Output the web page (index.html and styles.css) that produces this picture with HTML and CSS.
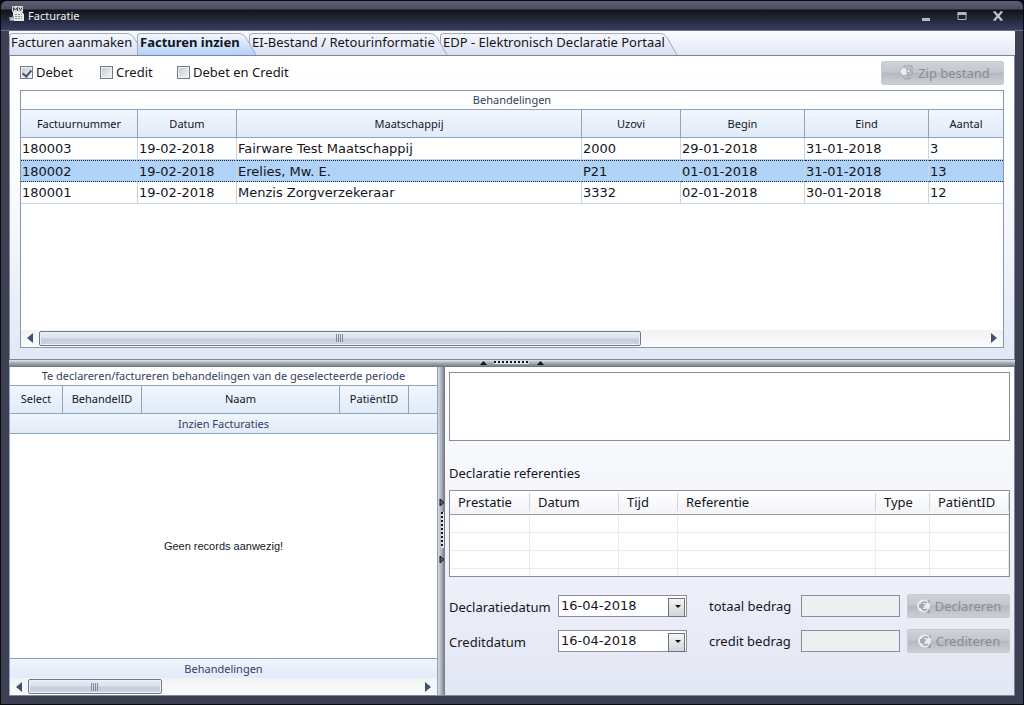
FILE: index.html
```html
<!DOCTYPE html>
<html lang="nl">
<head>
<meta charset="utf-8">
<title>Facturatie</title>
<link rel="stylesheet" href="styles.css">
</head>
<body>
<div class="window">
  <header class="titlebar">
    <svg class="app-icon" width="16" height="16" viewBox="0 0 16 16" aria-hidden="true">
      <path d="M4 6h9l2 2v7H4z" fill="#e9ece9"/>
      <path d="M3 0h11v6H3z" fill="#d5d9d6"/>
      <path d="M4.500 5V1.500L6.500 4l2-2.500V5M10 1.500l1.500 3 1.500-3" fill="none" stroke="#3b3f47"/>
      <path d="M6 8.500h2M9 8.500h2M12 8.500h1M6 10.500h2M9 10.500h2M12 10.500h1M6 12.500h2M9 12.500h2M12 12.500h1" stroke="#8a9096"/>
      <path d="M0 11h3l1-2 1 2v4H1z" fill="#8b9299"/>
      <path d="M1 13h5" stroke="#eef1ee"/>
    </svg>
    <h1 class="title">Facturatie</h1>
    <div class="controls">
      <button class="control" type="button" aria-label="Minimaliseren"><svg width="12" height="12" viewBox="0 0 12 12"><path d="M2 8h8v3H2z" fill="#b5b7c4"/></svg></button>
      <button class="control" type="button" aria-label="Maximaliseren"><svg width="12" height="12" viewBox="0 0 12 12"><path d="M2 3.500h8v6H2z" fill="none" stroke="#b5b7c4"/><path d="M1.500 2h9v3h-9z" fill="#b5b7c4"/></svg></button>
      <button class="control" type="button" aria-label="Sluiten"><svg width="12" height="12" viewBox="0 0 12 12"><path d="M2.500 2l7 8M9.500 2l-7 8" stroke="#c3c5d0" stroke-width="2.200"/><path d="M1 2h3M8 2h3M1 10h3M8 10h3" stroke="#c3c5d0"/></svg></button>
    </div>
  </header>

  <main class="content">
    <nav class="tabs" role="tablist">
      <button class="tab tab-create" type="button" role="tab"><span class="tab-face"></span><svg class="tab-end" width="20" height="22" viewBox="0 0 20 22"><path d="M0 .5C7 .5 8 3 11 8L19 22H0z" fill="url(#face)"/><path d="M0 .5C7 .5 8 3 11 8L19 22" fill="none" stroke="#a3aabb"/></svg><span class="tab-text">Facturen aanmaken</span></button>
      <button class="tab tab-view selected" type="button" role="tab" aria-selected="true"><span class="tab-face"></span><svg class="tab-end" width="20" height="22" viewBox="0 0 20 22"><path d="M0 .5C7 .5 8 3 11 8L19 22H0z" fill="url(#faceActive)"/><path d="M0 .5C7 .5 8 3 11 8L19 22" fill="none" stroke="#a3aabb"/></svg><span class="tab-text">Facturen inzien</span></button>
      <button class="tab tab-return" type="button" role="tab"><span class="tab-face"></span><svg class="tab-end" width="20" height="22" viewBox="0 0 20 22"><path d="M0 .5C7 .5 8 3 11 8L19 22H0z" fill="url(#face)"/><path d="M0 .5C7 .5 8 3 11 8L19 22" fill="none" stroke="#a3aabb"/></svg><span class="tab-text">EI-Bestand / Retourinformatie</span></button>
      <button class="tab tab-portal" type="button" role="tab"><span class="tab-face"></span><svg class="tab-end" width="20" height="22" viewBox="0 0 20 22"><defs><linearGradient id="face" x2="0" y2="1"><stop stop-color="#f7f8fd"/><stop offset="1" stop-color="#d9dff1"/></linearGradient><linearGradient id="faceActive" x2="0" y2="1"><stop stop-color="#f4f8ff"/><stop offset="1" stop-color="#b4d1f8"/></linearGradient></defs><path d="M0 .5C7 .5 8 3 11 8L19 22H0z" fill="url(#face)"/><path d="M0 .5C7 .5 8 3 11 8L19 22" fill="none" stroke="#a3aabb"/></svg><span class="tab-text">EDP - Elektronisch Declaratie Portaal</span></button>
    </nav>

    <section class="invoices">
      <div class="filters">
        <label class="check check-debet"><input type="checkbox" checked>Debet</label>
        <label class="check check-credit"><input type="checkbox">Credit</label>
        <label class="check"><input type="checkbox">Debet en Credit</label>
        <button class="push zip" type="button" disabled><svg width="16" height="16" viewBox="0 0 16 16" aria-hidden="true"><path d="M5 1h8v9H9v3h3M5 1v4" fill="#c9cdd1" stroke="#999ea4"/><circle cx="5" cy="6.500" r="4" fill="#eceeef" stroke="#b0b4b9"/><path d="M8 4h3v4H8z" fill="#e9ebec" stroke="#989da3"/><path d="M3 11l3 3h5v-2" fill="none" stroke="#a2a6ab"/></svg>Zip bestand</button>
      </div>
      <div class="grid-box">
        <div class="band-title">Behandelingen</div>
        <div class="grid-area">
          <table class="grid">
            <colgroup><col class="c-number"><col class="c-date"><col><col class="c-uzovi"><col class="c-begin"><col class="c-end"><col class="c-count"></colgroup>
            <thead><tr><th>Factuurnummer</th><th>Datum</th><th>Maatschappij</th><th>Uzovi</th><th>Begin</th><th>Eind</th><th>Aantal</th></tr></thead>
            <tbody>
              <tr><td>180003</td><td>19-02-2018</td><td>Fairware Test Maatschappij</td><td>2000</td><td>29-01-2018</td><td>31-01-2018</td><td>3</td></tr>
              <tr class="active"><td>180002</td><td>19-02-2018</td><td>Erelies, Mw. E.</td><td>P21</td><td>01-01-2018</td><td>31-01-2018</td><td>13</td></tr>
              <tr><td>180001</td><td>19-02-2018</td><td>Menzis Zorgverzekeraar</td><td>3332</td><td>02-01-2018</td><td>30-01-2018</td><td>12</td></tr>
            </tbody>
          </table>
        </div>
        <div class="scroll">
          <button class="arrow" type="button" aria-label="Naar links"><svg width="6" height="10" viewBox="0 0 6 10"><path d="M6 0v10L0 5z"/></svg></button>
          <div class="track"><div class="thumb thumb-top"></div></div>
          <button class="arrow" type="button" aria-label="Naar rechts"><svg width="6" height="10" viewBox="0 0 6 10"><path d="M0 0v10l6-5z"/></svg></button>
        </div>
      </div>
    </section>

    <div class="splitter-h">
      <svg width="64" height="6" viewBox="0 0 64 6" aria-hidden="true"><path d="M0 5l3.500-4L7 5zM57 5l3.500-4L64 5z" fill="#14171b"/><path d="M14 2.500h35" stroke="#e4e7ea" stroke-width="3"/><path d="M14 2h35" stroke="#14171b" stroke-width="2" stroke-dasharray="2 2"/></svg>
    </div>

    <div class="lower">
      <section class="treatments">
        <div class="band-title">Te declareren/factureren behandelingen van de geselecteerde periode</div>
        <table class="grid">
          <colgroup><col class="t-select"><col class="t-id"><col><col class="t-patient"><col class="t-rest"></colgroup>
          <thead><tr><th>Select</th><th>BehandelID</th><th>Naam</th><th>PatiëntID</th><th></th></tr></thead>
        </table>
        <div class="band band-top">Inzien Facturaties</div>
        <p class="empty">Geen records aanwezig!</p>
        <div class="band band-bottom">Behandelingen</div>
        <div class="scroll">
          <button class="arrow" type="button" aria-label="Naar links"><svg width="6" height="10" viewBox="0 0 6 10"><path d="M6 0v10L0 5z"/></svg></button>
          <div class="track"><div class="thumb thumb-low"></div></div>
          <button class="arrow" type="button" aria-label="Naar rechts"><svg width="6" height="10" viewBox="0 0 6 10"><path d="M0 0v10l6-5z"/></svg></button>
        </div>
      </section>

      <div class="splitter-v">
        <svg width="6" height="66" viewBox="0 0 6 66" aria-hidden="true"><path d="M1 1l4 3.500L1 8zM1 58l4 3.500L1 65z" fill="#59606b" stroke="#14171b"/><path d="M3.500 14v36" stroke="#e4e7ea" stroke-width="3"/><path d="M3 14v36" stroke="#14171b" stroke-width="2" stroke-dasharray="2 2"/></svg>
      </div>

      <section class="details">
        <textarea class="notes" aria-label="Opmerkingen"></textarea>
        <h2 class="subtitle">Declaratie referenties</h2>
        <div class="list-box">
          <table class="list">
            <colgroup><col class="l-perf"><col class="l-date"><col class="l-time"><col><col class="l-type"><col class="l-patient"></colgroup>
            <thead><tr><th>Prestatie</th><th>Datum</th><th>Tijd</th><th>Referentie</th><th>Type</th><th>PatiëntID</th></tr></thead>
            <tbody>
              <tr><td></td><td></td><td></td><td></td><td></td><td></td></tr>
              <tr><td></td><td></td><td></td><td></td><td></td><td></td></tr>
              <tr><td></td><td></td><td></td><td></td><td></td><td></td></tr>
              <tr><td></td><td></td><td></td><td></td><td></td><td></td></tr>
            </tbody>
          </table>
        </div>
        <form class="form">
          <label for="declDate">Declaratiedatum</label>
          <span class="combo"><select id="declDate"><option>16-04-2018</option></select></span>
          <label class="amount-label" for="total">totaal bedrag</label>
          <input class="amount" id="total" type="text" disabled>
          <button class="push" type="button" disabled><svg width="16" height="16" viewBox="0 0 16 16" aria-hidden="true"><circle cx="7.500" cy="8" r="6.500" fill="#e9ebee"/><path d="M11 5C8 2.500 5 5 5 8s3 5.500 6 3M3 7h6M3 9h5" fill="none" stroke="#9b9fa8" stroke-width="1.500"/><path d="M13 2v3M13 11v4M11 14h3" stroke="#8d929b"/></svg>Declareren</button>
          <label for="creditDate">Creditdatum</label>
          <span class="combo"><select id="creditDate"><option>16-04-2018</option></select></span>
          <label class="amount-label" for="credit">credit bedrag</label>
          <input class="amount" id="credit" type="text" disabled>
          <button class="push" type="button" disabled><svg width="16" height="16" viewBox="0 0 16 16" aria-hidden="true"><circle cx="7.500" cy="8" r="6.500" fill="#e9ebee"/><path d="M11 5C8 2.500 5 5 5 8s3 5.500 6 3M3 7h6M3 9h5" fill="none" stroke="#9b9fa8" stroke-width="1.500"/><path d="M13 2v3M13 11v4M11 14h3" stroke="#8d929b"/></svg>Crediteren</button>
        </form>
      </section>
    </div>
  </main>
</div>
</body>
</html>
```
FILE: styles.css
```css
* { box-sizing: border-box; }

body {
  margin: 0;
  background: #0b0c10;
  color: #15151c;
  font: 13px/16px "Noto Sans", sans-serif;
}

button, input, select, textarea { font: inherit; color: inherit; margin: 0; }

.window {
  display: flex;
  flex-direction: column;
  height: 100vh;
  min-height: 560px;
  padding-bottom: 8px;
  border: 1px solid #08090d;
  border-radius: 7px 7px 0 0;
  background: #3c4052;
}

/* Title bar */
.titlebar {
  display: flex;
  align-items: center;
  flex: none;
  height: 30px;
  padding: 0 8px;
  border-radius: 6px 6px 0 0;
  border-bottom: 1px solid #6d7186;
  background: linear-gradient(#5c5e75 0, #4b4d62 8px, #14151a 9px, #1c1e28 14px, #363c62 28px);
  color: #eef0f5;
}
.app-icon { margin: 0 3px 3px 0; }
.title { flex: 1; margin: 0; font: 11px/16px "Noto Sans", sans-serif; }
.controls { display: flex; gap: 12px; padding-right: 5px; }
.control { display: grid; place-items: center; width: 24px; height: 20px; padding: 0; border: 0; background: none; }

.content {
  display: grid;
  grid-template-rows: 24px minmax(0, 305fr) 7px minmax(0, 329fr);
  flex: 1;
  min-height: 0;
  margin: 0 8px;
  border-bottom: 1px solid #7e8799;
  background: #fff;
}

/* Tabs */
.tabs {
  display: flex;
  padding: 2px 0 0;
  background: linear-gradient(#fbfcff, #e4e8f5);
}
.tab {
  position: relative;
  height: 22px;
  padding: 0 0 4px 3px;
  border: 0;
  background: none;
  text-align: left;
  white-space: nowrap;
}
.tab-create { width: 128px; padding-left: 2px; }
.tab-view { width: 112px; z-index: 4; font-weight: bold; }
.tab-return { width: 191px; z-index: 2; }
.tab-portal { width: 230px; z-index: 1; }
.tab-face {
  position: absolute;
  inset: 0 12px 0 0;
  border: solid #a3aabb;
  border-width: 1px 0 0 1px;
  border-radius: 4px 0 0 0;
  background: linear-gradient(#f7f8fd, #d9dff1);
}
.selected .tab-face { background: linear-gradient(#f4f8ff, #b4d1f8); }
.tab-end { position: absolute; top: 0; right: -8px; }
.tab-text { position: relative; }

/* Upper panel */
.invoices {
  display: flex;
  flex-direction: column;
  padding: 5px 10px 11px;
  border: 1px solid #7e8799;
  background: linear-gradient(#fff, #fbfcfe 40%, #e3e8f6);
}
.filters { display: flex; align-items: flex-start; height: 25px; margin-bottom: 4px; }
.check { display: flex; align-items: center; gap: 3px; height: 22px; }
.check-debet { width: 80px; }
.check-credit { width: 77px; }
.check input {
  display: grid;
  place-items: center;
  width: 13px;
  height: 13px;
  appearance: none;
  border: 1px solid #747b88;
  background: linear-gradient(135deg, #c6cacd, #f4f5f5);
  box-shadow: inset 0 0 0 1px #eef0f1;
}
.check input:checked::before {
  content: "";
  width: 4px;
  height: 7px;
  border: solid #42597e;
  border-width: 0 2px 2px 0;
  transform: rotate(40deg);
}

.push {
  display: flex;
  align-items: center;
  justify-content: center;
  gap: 3px;
  height: 24px;
  padding: 0;
  border: 1px solid #c6cad1;
  border-radius: 2px;
  background: linear-gradient(#cfd3d8 0, #c3c7ce 46%, #b3b8c1 50%, #ccd0d5 100%);
  color: #898d96;
}
.zip { width: 123px; margin-left: auto; padding-left: 4px; }

.grid-box {
  display: flex;
  flex-direction: column;
  flex: 1;
  min-height: 0;
  border: 1px solid #8596b0;
  background: #fff;
}
.grid-area { flex: 1; min-height: 0; overflow: hidden; }
.band-title {
  flex: none;
  height: 19px;
  border-bottom: 1px solid #8ea3bf;
  background: #fff;
  color: #34405f;
  font-size: 11px;
  line-height: 18px;
  text-align: center;
}

.grid { width: 100%; table-layout: fixed; border-collapse: separate; border-spacing: 0; }
.grid th {
  height: 28px;
  padding: 0;
  border: solid #8ea3bf;
  border-width: 0 1px 1px 0;
  background: linear-gradient(#f1f6fd, #e0ebf9);
  font-size: 11px;
  font-weight: normal;
}
.grid th:last-child, .grid td:last-child { border-right: 0; }
.grid td {
  height: 22px;
  padding: 1px 1px 0;
  border: solid #c3d7ec;
  border-width: 0 1px 1px 0;
  font: 13px/16px "DejaVu Sans", sans-serif;
  white-space: nowrap;
}
.grid .active td {
  border-top: 1px dotted #14233c;
  border-bottom: 1px dotted #14233c;
  background: #afd2f6;
}
.c-number { width: 117px; }
.c-date, .c-uzovi { width: 99px; }
.c-begin { width: 124px; }
.c-end { width: 124px; }
.c-count { width: 74px; }

/* Scroll bars */
.scroll { display: flex; flex: none; height: 17px; background: linear-gradient(#f1f3f3, #fafbfb); }
.arrow { display: grid; place-items: center; width: 18px; padding: 0; border: 0; background: none; fill: #44506e; }
.track { flex: 1; }
.thumb {
  height: 15px;
  margin-top: 1px;
  border: 1px solid #6d7890;
  border-radius: 2px;
  box-shadow: inset 0 0 0 1px #eef1f7;
  background:
    repeating-linear-gradient(90deg, #818a9c 0, #818a9c 1px, transparent 1px, transparent 2px) center / 8px 8px no-repeat,
    linear-gradient(#e6eaf2 0, #dce2ec 45%, #c6cedd 55%, #cdd5e2 100%);
}
.thumb-top { width: 63.6%; }
.thumb-low { width: 34.2%; }

/* Splitters */
.splitter-h { display: grid; place-items: center; background: linear-gradient(#e3e6ea, #a9afb8 40%, #6d747e); }
.splitter-v { display: grid; place-items: center; background: linear-gradient(90deg, #d7dbe1, #a9afb8 50%, #6d747e); }

/* Lower left */
.lower { display: grid; grid-template-columns: minmax(0, 429fr) 7px minmax(0, 570fr); min-height: 0; }
.treatments { display: flex; flex-direction: column; min-height: 0; border-left: 1px solid #8ea3bf; border-right: 1px solid #8ea3bf; }
.t-select { width: 53px; }
.t-id { width: 79px; }
.t-patient { width: 69px; }
.t-rest { width: 28px; }
.band {
  flex: none;
  height: 20px;
  background: linear-gradient(#f0f5fd, #e2ebf9);
  color: #34405f;
  font-size: 11px;
  line-height: 19px;
  text-align: center;
}
.band-top { border-bottom: 1px solid #8ea3bf; }
.band-bottom { border-top: 1px solid #8ea3bf; }
.empty {
  display: grid;
  place-items: center;
  flex: 1;
  margin: 0;
  font: 11px/16px "Liberation Sans", sans-serif;
}

/* Lower right */
.details {
  display: flex;
  flex-direction: column;
  min-height: 0;
  padding: 5px 4px 0;
  border-right: 1px solid #7e8799;
  background: linear-gradient(#fff, #f8f9fd 25%, #e3e7f4);
}
.notes { display: block; flex: none; width: 100%; height: 69px; border: 1px solid #8b8d9c; background: #fff; resize: none; }
.subtitle { margin: 24px 0 9px; font: inherit; }
.list-box { flex: none; height: 87px; overflow: hidden; border: 1px solid #8b8d9c; background: #fff; }
.list { width: 100%; table-layout: fixed; border-collapse: separate; border-spacing: 0; }
.list th {
  height: 24px;
  padding: 0 8px;
  border-bottom: 1px solid #9a9ba8;
  background: linear-gradient(90deg, #d5d6dc, #d5d6dc) right center / 1px 18px no-repeat, linear-gradient(#fff, #f3f4f8);
  font-weight: normal;
  text-align: left;
}
.list td { height: 18px; padding: 0; border: solid #ebecf0; border-width: 0 1px 1px 0; }
.l-perf { width: 80px; }
.l-date { width: 89px; }
.l-time { width: 59px; }
.l-type { width: 54px; }
.l-patient { width: 79px; }

.form {
  display: grid;
  grid-template-columns: 109px 129px minmax(93px, 1fr) 99px 110px;
  row-gap: 11px;
  align-items: center;
  margin-top: 17px;
}
.form label { padding-top: 2px; white-space: nowrap; }
.form .amount-label { padding: 0 0 0 22px; }
.combo { position: relative; height: 22px; }
.combo select {
  width: 100%;
  height: 22px;
  padding: 0 2px;
  border: 1px solid #8b8d9c;
  border-radius: 0;
  appearance: none;
  background: #fff;
  font: 13px/16px "DejaVu Sans", sans-serif;
}
.combo::before {
  content: "";
  position: absolute;
  top: 3px;
  right: 2px;
  width: 15px;
  height: 17px;
  border: 1px solid #6f727c;
  background: linear-gradient(#f4f4f5, #d4d5d9);
  pointer-events: none;
}
.combo::after {
  content: "";
  position: absolute;
  top: 10px;
  right: 6px;
  border: solid transparent;
  border-width: 3px 3px 0;
  border-top-color: #111;
  pointer-events: none;
}
.amount { width: 100%; height: 22px; border: 1px solid #8b8d9c; background: #eeefef; }
.form .push { margin-left: 7px; }
```
